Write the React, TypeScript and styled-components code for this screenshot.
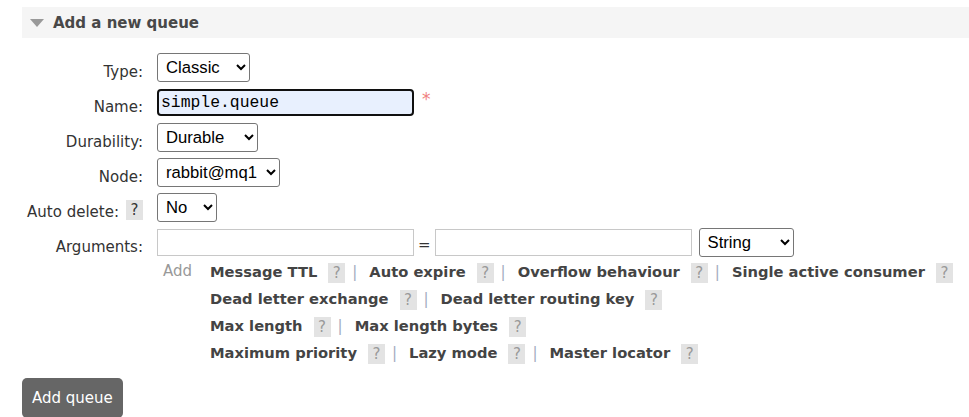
import * as React from 'react';
import styled, { createGlobalStyle } from 'styled-components';

const GlobalStyle = createGlobalStyle`
  html, body {
    margin: 0;
    background: #fff;
    overflow: hidden;
  }
  body {
    padding: 7px 0 0 22px;
    font-family: "DejaVu Sans", Verdana, sans-serif;
    font-size: 15px;
    color: #333;
  }
`;

const SectionHeader = styled.div`
  height: 31px;
  background: #f5f5f5;
  display: flex;
  align-items: center;
  padding-left: 8px;
`;

const Triangle = styled.span`
  width: 0;
  height: 0;
  border-left: 7px solid transparent;
  border-right: 7px solid transparent;
  border-top: 8px solid #999;
  margin-right: 9px;
  margin-top: 1px;
`;

const Title = styled.h2`
  margin: 0;
  font-size: 15px;
  font-weight: bold;
  color: #484848;
`;

const Form = styled.div`
  display: grid;
  grid-template-columns: 121px 1fr;
  grid-auto-rows: 35px;
  column-gap: 14px;
  margin-top: 12px;
`;

const Label = styled.label`
  display: flex;
  align-items: center;
  justify-content: flex-end;
  padding-top: 9px;
  white-space: nowrap;
  color: #333;
`;

const Field = styled.div`
  display: flex;
  align-items: center;
`;

const Select = styled.select<{ $width: number; $gap?: number }>`
  width: ${(p) => p.$width}px;
  height: 29px;
  margin-left: ${(p) => p.$gap ?? 0}px;
  font-family: "Liberation Sans", Arial, sans-serif;
  font-size: 16.67px;
  color: #000;
  background: #fff;
  border: 1px solid #767676;
  border-radius: 3px;
  padding: 0 4px;
`;

const TextInput = styled.input<{ $active?: boolean }>`
  box-sizing: border-box;
  width: 257px;
  height: 27px;
  padding: 0 2px;
  font-family: "Liberation Mono", "Courier New", monospace;
  font-size: 16.4px;
  color: #000;
  outline: none;
  background: ${(p) => (p.$active ? '#e8f0fe' : '#fff')};
  border: ${(p) => (p.$active ? '2px solid #101010' : '1px solid #c8c8c8')};
  border-radius: ${(p) => (p.$active ? '4px' : '0')};
`;

const Required = styled.span`
  color: #f08080;
  font-size: 17px;
  margin-left: 8px;
  align-self: flex-start;
  margin-top: 4px;
`;

const Equals = styled.span`
  color: #333;
  margin: 0 4px;
  padding-top: 4px;
`;

const Help = styled.span<{ $dark?: boolean }>`
  display: inline-flex;
  align-items: center;
  justify-content: center;
  width: 17px;
  height: 20px;
  background: #e3e3e3;
  color: ${(p) => (p.$dark ? '#333' : '#999')};
  font-weight: normal;
  font-size: 15px;
`;

const LabelHelp = styled(Help)`
  margin-left: 7px;
  margin-top: -5px;
`;

const ArgsRow = styled.div`
  display: flex;
  margin-top: -2px;
  padding-left: 135px;
`;

const AddText = styled.span`
  width: 47px;
  padding-left: 6px;
  color: #999;
  line-height: 27px;
`;

const LinkLines = styled.div`
  display: flex;
  flex-direction: column;
`;

const LinkLine = styled.div`
  display: flex;
  align-items: center;
  height: 27px;
`;

const ArgLink = styled.span`
  font-weight: bold;
  font-size: 14.7px;
  color: #444;
  margin-right: 11px;
  white-space: nowrap;
`;

const Sep = styled.span`
  color: #a3acc0;
  margin: 0 12px 0 7px;
`;

const HelpInLine = styled(Help)`
  margin-top: 3px;
`;

const SubmitButton = styled.button`
  margin-top: 12px;
  height: 40px;
  padding: 0 10px;
  background: #666;
  color: #fff;
  border: none;
  border-radius: 5px;
  font-family: "DejaVu Sans", Verdana, sans-serif;
  font-size: 15px;
`;

const argLines: string[][] = [
  ['Message TTL', 'Auto expire', 'Overflow behaviour', 'Single active consumer'],
  ['Dead letter exchange', 'Dead letter routing key'],
  ['Max length', 'Max length bytes'],
  ['Maximum priority', 'Lazy mode', 'Master locator'],
];

const App = () => (
  <>
    <GlobalStyle />
    <SectionHeader>
      <Triangle />
      <Title>Add a new queue</Title>
    </SectionHeader>
    <Form>
      <Label>Type:</Label>
      <Field>
        <Select $width={93} defaultValue="classic">
          <option value="classic">Classic</option>
          <option value="quorum">Quorum</option>
        </Select>
      </Field>

      <Label>Name:</Label>
      <Field>
        <TextInput $active defaultValue="simple.queue" />
        <Required>*</Required>
      </Field>

      <Label>Durability:</Label>
      <Field>
        <Select $width={101} defaultValue="durable">
          <option value="durable">Durable</option>
          <option value="transient">Transient</option>
        </Select>
      </Field>

      <Label>Node:</Label>
      <Field>
        <Select $width={123} defaultValue="mq1">
          <option value="mq1">rabbit@mq1</option>
        </Select>
      </Field>

      <Label>
        Auto delete:
        <LabelHelp $dark>?</LabelHelp>
      </Label>
      <Field>
        <Select $width={60} defaultValue="no">
          <option value="no">No</option>
          <option value="yes">Yes</option>
        </Select>
      </Field>

      <Label>Arguments:</Label>
      <Field>
        <TextInput />
        <Equals>=</Equals>
        <TextInput />
        <Select $width={95} $gap={7} defaultValue="string">
          <option value="string">String</option>
          <option value="number">Number</option>
          <option value="boolean">Boolean</option>
          <option value="list">List</option>
        </Select>
      </Field>
    </Form>
    <ArgsRow>
      <AddText>Add</AddText>
      <LinkLines>
        {argLines.map((line, i) => (
          <LinkLine key={i}>
            {line.map((name, j) => (
              <React.Fragment key={name}>
                <ArgLink>{name}</ArgLink>
                <HelpInLine>?</HelpInLine>
                {j < line.length - 1 && <Sep>|</Sep>}
              </React.Fragment>
            ))}
          </LinkLine>
        ))}
      </LinkLines>
    </ArgsRow>
    <SubmitButton>Add queue</SubmitButton>
  </>
);

export default App;
